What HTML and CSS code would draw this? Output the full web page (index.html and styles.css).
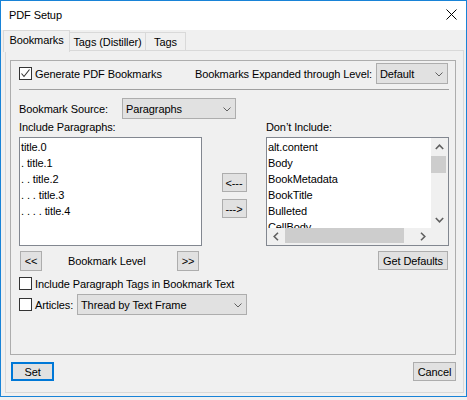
FILE: index.html
```html
<!DOCTYPE html>
<html>
<head>
<meta charset="utf-8">
<link rel="stylesheet" href="styles.css">
</head>
<body>
<div class="window">
  <div class="titlebar">
    <span class="title">PDF Setup</span>
    <svg class="close" width="11" height="11" viewBox="0 0 11 11"><path d="M0.5 0.5L10.5 10.5M10.5 0.5L0.5 10.5" stroke="#000" stroke-width="1"/></svg>
  </div>
  <div class="tabs">
    <div class="tab active t1">Bookmarks</div>
    <div class="tab t2">Tags (Distiller)</div>
    <div class="tab t3">Tags</div>
  </div>
  <div class="panel">
    <div class="group">
      <div class="row row1">
        <div class="check">
          <span class="box"><svg width="11" height="11" viewBox="0 0 11 11"><polyline points="1.5,5.5 4,8.5 9.5,1.5" fill="none" stroke="#333" stroke-width="1.1"/></svg></span>
          <span>Generate PDF Bookmarks</span>
        </div>
        <div class="levelctl">
          <span>Bookmarks Expanded through Level:</span>
          <div class="combo c-default"><span>Default</span><svg width="8" height="5" viewBox="0 0 8 5"><polyline points="0.5,0.5 4,4 7.5,0.5" fill="none" stroke="#606060" stroke-width="1"/></svg></div>
        </div>
      </div>
      <div class="sep"></div>
      <div class="row source">
        <span class="src-label">Bookmark Source:</span>
        <div class="combo c-para"><span>Paragraphs</span><svg width="8" height="5" viewBox="0 0 8 5"><polyline points="0.5,0.5 4,4 7.5,0.5" fill="none" stroke="#606060" stroke-width="1"/></svg></div>
      </div>
      <div class="cols">
        <div class="col">
          <div class="lbl">Include Paragraphs:</div>
          <div class="list">
            <div class="items">
              <div class="item">title.0</div>
              <div class="item">. title.1</div>
              <div class="item">. . title.2</div>
              <div class="item">. . . title.3</div>
              <div class="item">. . . . title.4</div>
            </div>
          </div>
          <div class="levelrow">
            <button class="btn b-lvl">&lt;&lt;</button>
            <span class="lvl-label">Bookmark Level</span>
            <button class="btn b-lvl b-right">&gt;&gt;</button>
          </div>
        </div>
        <div class="mid">
          <button class="btn b-move">&lt;---</button>
          <button class="btn b-move">---&gt;</button>
        </div>
        <div class="col">
          <div class="lbl">Don’t Include:</div>
          <div class="list scroll">
            <div class="items">
              <div class="item">alt.content</div>
              <div class="item">Body</div>
              <div class="item">BookMetadata</div>
              <div class="item">BookTitle</div>
              <div class="item">Bulleted</div>
              <div class="item">CellBody</div>
            </div>
            <div class="vscroll">
              <div class="arrow"><svg width="9" height="6" viewBox="0 0 9 6"><polyline points="0.8,5 4.5,1.2 8.2,5" fill="none" stroke="#606060" stroke-width="1.6"/></svg></div>
              <div class="vtrack"><div class="vthumb"></div></div>
              <div class="arrow"><svg width="9" height="6" viewBox="0 0 9 6"><polyline points="0.8,1 4.5,4.8 8.2,1" fill="none" stroke="#606060" stroke-width="1.6"/></svg></div>
            </div>
            <div class="hscroll">
              <div class="arrow"><svg width="6" height="9" viewBox="0 0 6 9"><polyline points="5,0.8 1.2,4.5 5,8.2" fill="none" stroke="#606060" stroke-width="1.6"/></svg></div>
              <div class="htrack"><div class="hthumb"></div></div>
              <div class="arrow"><svg width="6" height="9" viewBox="0 0 6 9"><polyline points="1,0.8 4.8,4.5 1,8.2" fill="none" stroke="#606060" stroke-width="1.6"/></svg></div>
            </div>
            <div class="corner"></div>
          </div>
          <div class="defrow">
            <button class="btn b-def">Get Defaults</button>
          </div>
        </div>
      </div>
      <div class="row chk2">
        <div class="check">
          <span class="box"></span>
          <span>Include Paragraph Tags in Bookmark Text</span>
        </div>
      </div>
      <div class="row articles">
        <div class="check">
          <span class="box"></span>
          <span class="art-label">Articles:</span>
        </div>
        <div class="combo c-art"><span>Thread by Text Frame</span><svg width="8" height="5" viewBox="0 0 8 5"><polyline points="0.5,0.5 4,4 7.5,0.5" fill="none" stroke="#606060" stroke-width="1"/></svg></div>
      </div>
    </div>
    <div class="footer">
      <button class="btn b-foot b-set">Set</button>
      <button class="btn b-foot">Cancel</button>
    </div>
  </div>
</div>
</body>
</html>
```

FILE: styles.css
```css
* { box-sizing: border-box; }
html, body { margin: 0; padding: 0; }
body {
  width: 467px;
  height: 400px;
  overflow: hidden;
  background: #f0f0f0;
  font-family: "Liberation Sans", Arial, sans-serif;
  font-size: 11px;
  letter-spacing: -0.1px;
  color: #000;
}
.window {
  width: 467px;
  height: 397px;
  border: 1px solid #1883d7;
  background: #f0f0f0;
  display: flex;
  flex-direction: column;
}
.titlebar {
  flex: none;
  height: 29px;
  background: #fff;
  display: flex;
  justify-content: space-between;
  align-items: flex-start;
  padding: 0 9px 0 8px;
  line-height: 29px;
}
.close { margin-top: 8px; }
.tabs {
  flex: none;
  height: 20px;
  display: flex;
  align-items: flex-end;
  padding-left: 2px;
}
.tab {
  height: 18px;
  border: 1px solid #d9d9d9;
  border-bottom: none;
  background: #f0f0f0;
  text-align: center;
  line-height: 16px;
  padding-top: 1px;
  margin-left: -1px;
  white-space: nowrap;
}
.tab.active {
  height: 22px;
  margin-left: 0;
  margin-bottom: -2px;
  position: relative;
  z-index: 1;
}
.t1 { width: 67px; }
.t2 { width: 77px; }
.t3 { width: 41px; }
.panel {
  flex: none;
  height: 343px;
  margin: 0 2px 0 4px;
  border: 1px solid #d9d9d9;
}
.group {
  height: 295px;
  margin: 9px 7px 0 4px;
  border: 1px solid #adadad;
  padding: 2px 6px 0 8px;
}
.row { display: flex; align-items: center; }
.row1 {
  height: 21px;
  justify-content: space-between;
  padding-right: 1px;
}
.check { display: flex; align-items: center; gap: 3px; white-space: nowrap; }
.box {
  width: 13px;
  height: 13px;
  border: 1px solid #333;
  background: #fff;
  display: flex;
  align-items: center;
  justify-content: center;
  flex: none;
}
.box svg { display: block; }
.levelctl { display: flex; align-items: center; gap: 4px; white-space: nowrap; }
.combo {
  height: 21px;
  border: 1px solid #adadad;
  background: #e1e1e1;
  display: flex;
  align-items: center;
  justify-content: space-between;
  padding: 0 4px 0 3px;
  white-space: nowrap;
}
.combo svg { display: block; margin-top: 2px; }
.c-default { width: 72px; }
.c-para { width: 114px; }
.c-art { width: 170px; }
.sep {
  margin-top: 5px;
  height: 1px;
  background: #a0a0a0;
}
.source { margin-top: 8px; height: 21px; }
.src-label { width: 103px; white-space: nowrap; }
.cols {
  display: grid;
  grid-template-columns: 183px 64px 183px;
}
.lbl {
  height: 16px;
  line-height: 16px;
  margin-bottom: 2px;
  white-space: nowrap;
}
.list {
  height: 109px;
  border: 1px solid #828790;
  background: #fff;
  overflow: hidden;
}
.items { padding: 1px 0 0 1px; overflow: hidden; }
.item { height: 16px; line-height: 16px; white-space: nowrap; }
.list.scroll {
  display: grid;
  grid-template-columns: 1fr 17px;
  grid-template-rows: 90px 17px;
}
.vscroll {
  background: #f0f0f0;
  display: flex;
  flex-direction: column;
}
.arrow {
  width: 17px;
  height: 17px;
  display: flex;
  align-items: center;
  justify-content: center;
  flex: none;
}
.arrow svg { display: block; }
.vtrack { flex: 1; }
.vthumb { width: 15px; height: 17px; margin-top: 1px; background: #cdcdcd; }
.hscroll {
  background: #f0f0f0;
  display: flex;
}
.htrack { flex: 1; }
.hthumb { width: 119px; height: 15px; margin-left: 1px; background: #cdcdcd; }
.corner { background: #f0f0f0; }
.btn {
  font-family: "Liberation Sans", Arial, sans-serif;
  font-size: 11px;
  letter-spacing: -0.1px;
  color: #000;
  background: #e1e1e1;
  border: 1px solid #adadad;
  padding: 0;
  margin: 0;
  white-space: nowrap;
}
.levelrow {
  margin-top: 5px;
  height: 20px;
  display: flex;
  align-items: center;
}
.b-lvl { width: 22px; height: 20px; margin-left: 1px; }
.b-right { margin-left: auto; margin-right: 3px; }
.lvl-label { margin-left: 26px; white-space: nowrap; }
.mid {
  padding-top: 54px;
  display: flex;
  flex-direction: column;
  align-items: center;
  gap: 7px;
}
.b-move { width: 25px; height: 19px; }
.defrow {
  margin-top: 5px;
  height: 20px;
  display: flex;
  justify-content: flex-end;
  align-items: flex-start;
  padding-right: 1px;
}
.b-def { width: 70px; height: 19px; }
.chk2 { margin-top: 6px; height: 13px; }
.articles { margin-top: 4px; height: 21px; }
.art-label { width: 42px; }
.footer {
  margin-top: 7px;
  padding: 0 7px 0 5px;
  display: flex;
  justify-content: space-between;
}
.b-foot { width: 43px; height: 19px; }
.b-set { border: 2px solid #0078d7; }
```
